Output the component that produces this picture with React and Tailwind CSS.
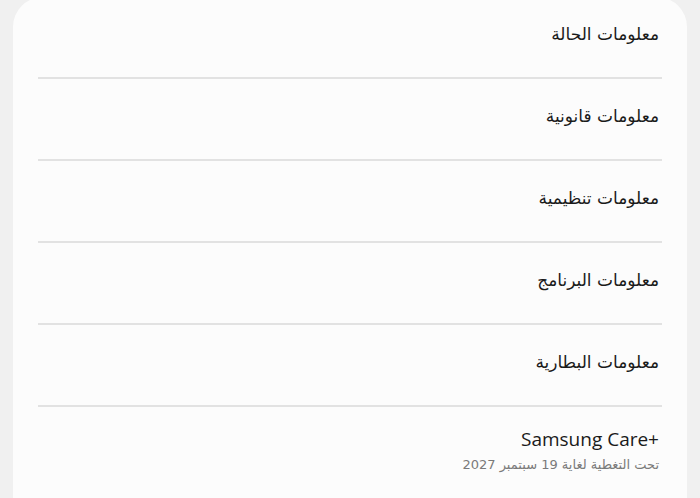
const items = [
  "معلومات الحالة",
  "معلومات قانونية",
  "معلومات تنظيمية",
  "معلومات البرنامج",
  "معلومات البطارية",
];

export default function App() {
  return (
    <div
      dir="rtl"
      className="h-[498px] w-[700px] overflow-hidden bg-[#f0f0f0] px-[13px]"
      style={{ fontFamily: '"DejaVu Sans", "Noto Sans", sans-serif' }}
    >
      <div className="-mt-[3px] h-[560px] rounded-[30px] bg-[#fcfcfc] px-[25px]">
        {items.map((label) => (
          <div
            key={label}
            className="flex h-[82px] items-center border-b-2 border-[#e2e2e2] pb-[4px] pr-[3px]"
          >
            <span className="text-[17px] text-[#1a1a1a]">{label}</span>
          </div>
        ))}

        <div className="pr-[3px] pt-[18px]">
          <p
            dir="ltr"
            className="text-right text-[19px] text-[#1a1a1a]"
            style={{ fontFamily: '"Open Sans", "Noto Sans", sans-serif' }}
          >
            Samsung Care+
          </p>
          <p className="mt-[1px] text-[13px] text-[#7a7a7a]">
            تحت التغطية لغاية 19 سبتمبر 2027
          </p>
        </div>
      </div>
    </div>
  );
}
